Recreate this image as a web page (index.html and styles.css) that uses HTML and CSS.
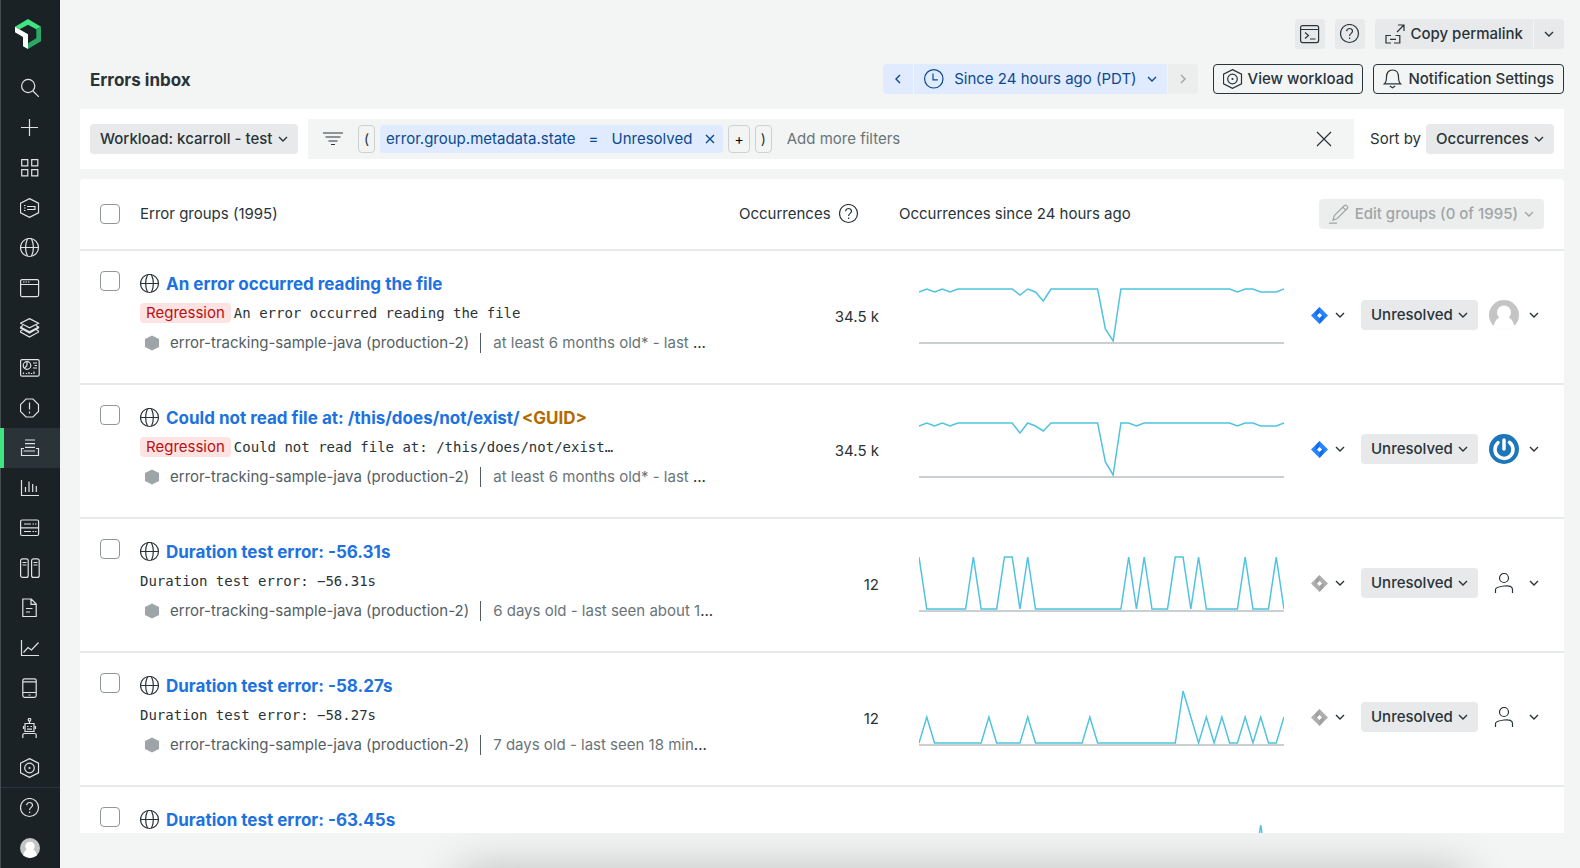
FILE: index.html
```html
<!DOCTYPE html>
<html lang="en">
<head>
    <meta charset="UTF-8">
    <meta name="viewport" content="width=device-width, initial-scale=1.0">
    <title>Errors inbox</title>
    <link rel="stylesheet" href="styles.css">
</head>
<body>

    <!-- Icon sprite -->
    <svg class="sprite" aria-hidden="true">
        <symbol id="search" viewBox="0 0 20 20"><circle cx="8.2" cy="8" r="6.6"/><path d="M13 13l5.8 5.8"/></symbol>
        <symbol id="plus" viewBox="0 0 20 20"><path d="M9.5 1v17M1 9.5h17"/></symbol>
        <symbol id="apps" viewBox="0 0 20 20"><path d="M1.7 1.7h6.1v6.1H1.7zM11.7 1.7h6.1v6.1h-6.1zM1.7 11.7h6.1v6.1H1.7zM11.7 11.7h6.1v6.1h-6.1z"/></symbol>
        <symbol id="entities" viewBox="0 0 20 20"><path d="M9.5.6l9 4.6v9.6l-9 4.6-9-4.6V5.2z"/><path d="M4 7.5h1.5M7 8.5h8v3H7M4 10h1.5M4 12.5h1.5M7 8.5h3"/></symbol>
        <symbol id="globe" viewBox="0 0 20 20"><circle cx="9.5" cy="9.5" r="9"/><path d="M7.5.8C5 6.5 5 12.5 7.5 18.2M11.5.8c2.5 5.7 2.5 11.7 0 17.4M.5 9.5h18"/></symbol>
        <symbol id="browser" viewBox="0 0 20 20"><rect x=".6" y="1.6" width="18" height="17" rx="1.5"/><path d="M.6 6.5h18M3 4h1.5M5.500 4H7M8 4h1.5"/></symbol>
        <symbol id="layers" viewBox="0 0 20 20"><path d="M9.5.6l9 4.6-9 4.6-9-4.6zM.5 9l9 4.7 9-4.7L16 7.5M.5 9L3 7.5M.5 9v1l9 5 9-5V9M.5 13v1l9 5 9-5v-1L16 11.5M.5 13L3 11.500"/></symbol>
        <symbol id="dashboard" viewBox="0 0 20 20"><rect x=".6" y="1.6" width="18.6" height="16.6" rx="1.5"/><circle cx="7" cy="7.5" r="3.8"/><path d="M7 7.5V3.8M7 7.5l-2.5 2.7M13 5h4M14.5 7.5H17M13 10h4M3.5 14.5V16M6.5 15v1M9 14v2M11.5 15v1M14 13.5V16"/></symbol>
        <symbol id="alert" viewBox="0 0 20 20"><path d="M6 1h7l5.5 5.5v7L13 19H6L.5 13.5v-7zM9.5 4.5v7M9.5 13.5v2"/></symbol>
        <symbol id="inbox" viewBox="0 0 20 20"><path d="M5 2h10M5 5.7h10M5 9.3h10M3.5 13H15M4 10.5H1.5v7h17v-7H16"/></symbol>
        <symbol id="bars" viewBox="0 0 20 20"><path d="M1.5 2v15.500H19M5.5 14V9M9 14V3.5M12.7 14V6M16.3 14V8"/></symbol>
        <symbol id="server" viewBox="0 0 20 20"><rect x=".6" y="2" width="18" height="15.5" rx="1.5"/><path d="M.6 9.8h18M4 6h7M12.5 6H14M15 6h1.5M4 13.5h7M12.5 13.5H14M15 13.5h1.5"/></symbol>
        <symbol id="racks" viewBox="0 0 20 20"><rect x=".6" y=".8" width="7.6" height="18.6" rx="2"/><rect x="11.6" y=".8" width="7.6" height="18.6" rx="2"/><path d="M2.5 4.5h4M2.5 7h4M13.5 4.5h4M13.5 7h4"/></symbol>
        <symbol id="doc" viewBox="0 0 20 20"><path d="M2.8 1h8.5l4.9 5v12.5H2.8zM11 1v5.3h5M6 10.5h6.5M6 14h4"/></symbol>
        <symbol id="trend" viewBox="0 0 20 20"><path d="M1.5 2v15.5H19M3.5 14.5L8 9.5l3.5 2.5 7-7.5"/></symbol>
        <symbol id="phone" viewBox="0 0 20 20"><rect x="2.8" y=".8" width="13.4" height="18.6" rx="1.8"/><path d="M3 3.8h13M3 14.5h13M8.5 17h2"/></symbol>
        <symbol id="robot" viewBox="0 0 20 20"><circle cx="9.5" cy="1.8" r="1.3"/><path d="M9.5 3v2.5M5 5.5h9v8H5zM3.5 8v3M15.5 8v3M7 8.5h1.5M10.5 8.5H12M7 11.2h5M2.8 20v-3q0-1.5 1.5-1.5h10.4q1.5 0 1.500 1.5v3"/></symbol>
        <symbol id="workload" viewBox="0 0 20 20"><path d="M9.5.6l9 4.6v9.6l-9 4.6-9-4.6V5.2z"/><circle cx="9.500" cy="10" r="4.8"/><circle cx="9.5" cy="10" r=".5"/></symbol>
        <symbol id="help" viewBox="0 0 20 20"><circle cx="9.5" cy="9.5" r="9"/><path d="M6.7 7.2c0-3.6 5.8-3.6 5.8 0 0 2.2-2.9 2.2-2.9 4.8M9.6 13.5V15"/></symbol>
        <symbol id="console" viewBox="0 0 20 20"><rect x=".6" y="1.6" width="18" height="17" rx="2"/><path d="M.6 5.5h18M5 8.5l3.5 3-3.5 3M10 15h5.5"/></symbol>
        <symbol id="permalink" viewBox="0 0 20 20"><path d="M12 8l6.5-6.5M13 1h6v6M6 11.5H1V19h5M10.5 11.5h4.3V19H9M5 15.3h6"/></symbol>
        <symbol id="clock" viewBox="0 0 20 20"><circle cx="9.8" cy="9.8" r="9.2"/><path d="M9 4.5v6.3h4.8"/></symbol>
        <symbol id="bell" viewBox="0 0 20 20"><path d="M1.5 14.8c2-1.8 2-3.2 2-6.8C3.5 3.5 6 1 9.5 1s6 2.5 6 7c0 3.6 0 5 2 6.8zM6.8 17l2.7 1.8 2.7-1.8"/></symbol>
        <symbol id="filter" viewBox="0 0 20 20"><path d="M0 4h20M2.5 8h15M5.5 12h9M8 15.5h4"/></symbol>
        <symbol id="close" viewBox="0 0 20 20"><path d="M3 3l14 14M17 3L3 17"/></symbol>
        <symbol id="pencil" viewBox="0 0 20 20"><path d="M4 16l1.3-4.5L15.5 1.5q1-.8 2 .2l.8.8q.9 1 0 2L8 14.7zM13.8 3.2L16.600 6M0 19.2h8"/></symbol>
        <symbol id="chevron" viewBox="0 0 10 10"><path d="M1 3l4 4 4-4"/></symbol>
        <symbol id="chevron-left" viewBox="0 0 10 10"><path d="M7 1L3 5l4 4"/></symbol>
        <symbol id="chevron-right" viewBox="0 0 10 10"><path d="M3 1l4 4-4 4"/></symbol>
        <symbol id="x-small" viewBox="0 0 10 10"><path d="M1 1l8 8M9 1L1 9"/></symbol>
        <symbol id="user" viewBox="0 0 20 20"><circle cx="10" cy="5" r="4.5"/><path d="M1.5 20v-3.5Q1.5 14 10 13t8.5 3.500V20"/></symbol>
        <symbol id="hexagon" viewBox="0 0 14 16"><path d="M7 .5L14 4v8l-7 3.5L0 12V4z"/></symbol>
        <symbol id="jira" viewBox="0 0 18 18"><path d="M9 0l9 9-9 9-9-9z"/><path class="jira-fold" d="M9 0v6.5l-3 3L4.5 8q0-4 4.5-8zM9 18v-6.5l3-3 1.5 1.5q0 4-4.5 8z"/><path class="jira-hole" d="M9 6.3L11.7 9 9 11.7 6.3 9z"/></symbol>
        <symbol id="avatar" viewBox="0 0 30 30"><circle cx="15" cy="15" r="15" fill="#c4c4c4"/><circle cx="15" cy="12.5" r="7" fill="#fff"/><path d="M4.5 26q2-8 7.5-9h6q5.5 1 7.5 9-4.5 4-10.500 4T4.500 26z" fill="#fff"/></symbol>
        <symbol id="gravatar" viewBox="0 0 30 30"><circle cx="15" cy="15" r="15" fill="#1e76ba"/><path d="M15 6v9" fill="none" stroke="#fff" stroke-width="3.5" stroke-linecap="round"/><path d="M20.5 8.3a9 9 0 1 1-11.5.4" fill="none" stroke="#fff" stroke-width="3.5" stroke-linecap="round"/></symbol>
    </svg>

    <!-- Sidebar -->
    <nav class="sidebar" aria-label="Main">
        <a class="logo" href="#" aria-label="Home">
            <svg width="26" height="30" viewBox="45 57 78 90">
                <path d="M45 80l39-23 39 23-14 8-25-14-25 14z" fill="#3ee681"/>
                <path d="M123 80v44l-39 23v-17l25-15V88z" fill="#2ba866"/>
                <path d="M45 80l39 23v44l-15-8v-28L45 97z" fill="#fff"/>
            </svg>
        </a>
        <a class="nav-item" href="#" aria-label="Search"><svg class="icon"><use href="#search"/></svg></a>
        <a class="nav-item" href="#" aria-label="Add data"><svg class="icon"><use href="#plus"/></svg></a>
        <a class="nav-item" href="#" aria-label="Apps"><svg class="icon"><use href="#apps"/></svg></a>
        <a class="nav-item" href="#" aria-label="All entities"><svg class="icon"><use href="#entities"/></svg></a>
        <a class="nav-item" href="#" aria-label="APM"><svg class="icon"><use href="#globe"/></svg></a>
        <a class="nav-item" href="#" aria-label="Browser"><svg class="icon"><use href="#browser"/></svg></a>
        <a class="nav-item" href="#" aria-label="Kubernetes"><svg class="icon"><use href="#layers"/></svg></a>
        <a class="nav-item" href="#" aria-label="Dashboards"><svg class="icon"><use href="#dashboard"/></svg></a>
        <a class="nav-item" href="#" aria-label="Alerts"><svg class="icon"><use href="#alert"/></svg></a>
        <a class="nav-item active" href="#" aria-label="Errors inbox"><svg class="icon"><use href="#inbox"/></svg></a>
        <a class="nav-item" href="#" aria-label="Query data"><svg class="icon"><use href="#bars"/></svg></a>
        <a class="nav-item" href="#" aria-label="Infrastructure"><svg class="icon"><use href="#server"/></svg></a>
        <a class="nav-item" href="#" aria-label="Hosts"><svg class="icon"><use href="#racks"/></svg></a>
        <a class="nav-item" href="#" aria-label="Logs"><svg class="icon"><use href="#doc"/></svg></a>
        <a class="nav-item" href="#" aria-label="Metrics"><svg class="icon"><use href="#trend"/></svg></a>
        <a class="nav-item" href="#" aria-label="Mobile"><svg class="icon"><use href="#phone"/></svg></a>
        <a class="nav-item" href="#" aria-label="Synthetics"><svg class="icon"><use href="#robot"/></svg></a>
        <a class="nav-item" href="#" aria-label="Workloads"><svg class="icon"><use href="#workload"/></svg></a>
        <div class="sidebar-footer">
            <a class="nav-item" href="#" aria-label="Help"><svg class="icon"><use href="#help"/></svg></a>
            <a class="nav-item" href="#" aria-label="Account"><svg class="icon picture"><use href="#avatar"/></svg></a>
        </div>
    </nav>

    <main class="page">
        <div class="toolbar">
            <button class="btn btn-icon" aria-label="Console"><svg class="icon"><use href="#console"/></svg></button>
            <button class="btn btn-icon" aria-label="Help"><svg class="icon"><use href="#help"/></svg></button>
            <div class="btn-group">
                <button class="btn"><svg class="icon"><use href="#permalink"/></svg>Copy permalink</button>
                <button class="btn btn-icon" aria-label="More"><svg class="chevron"><use href="#chevron"/></svg></button>
            </div>
        </div>

        <header class="page-header">
            <h1>Errors inbox</h1>
            <div class="btn-group time-picker">
                <button class="btn btn-icon" aria-label="Previous"><svg class="chevron"><use href="#chevron-left"/></svg></button>
                <button class="btn btn-time"><svg class="icon"><use href="#clock"/></svg>Since 24 hours ago (PDT)<svg class="chevron"><use href="#chevron"/></svg></button>
                <button class="btn btn-icon" aria-label="Next" disabled><svg class="chevron"><use href="#chevron-right"/></svg></button>
            </div>
            <button class="btn btn-outline"><svg class="icon"><use href="#workload"/></svg>View workload</button>
            <button class="btn btn-outline"><svg class="icon"><use href="#bell"/></svg>Notification Settings</button>
        </header>

        <!-- Filters -->
        <section class="filters">
            <div class="select">
                <select aria-label="Workload"><option>Workload: kcarroll - test</option></select>
                <svg class="chevron"><use href="#chevron"/></svg>
            </div>
            <div class="filter-field">
                <svg class="icon filter-icon"><use href="#filter"/></svg>
                <span class="token">(</span>
                <span class="chip">
                    <span>error.group.metadata.state</span>
                    <span>=</span>
                    <span>Unresolved</span>
                    <button aria-label="Remove filter"><svg class="chevron"><use href="#x-small"/></svg></button>
                </span>
                <button class="token token-add">+</button>
                <span class="token">)</span>
                <input type="text" placeholder="Add more filters" aria-label="Add more filters">
                <button class="clear" aria-label="Clear filters"><svg class="icon"><use href="#close"/></svg></button>
            </div>
            <div class="sort">
                <label for="sort">Sort by</label>
                <div class="select">
                    <select id="sort"><option>Occurrences</option></select>
                    <svg class="chevron"><use href="#chevron"/></svg>
                </div>
            </div>
        </section>

        <!-- Error groups -->
        <section class="groups">
            <table>
                <colgroup>
                    <col class="col-check">
                    <col>
                    <col class="col-count">
                    <col class="col-chart">
                    <col class="col-actions">
                </colgroup>
                <thead>
                    <tr>
                        <th class="check"><input type="checkbox" aria-label="Select all"></th>
                        <th>Error groups (1995)</th>
                        <th class="count"><span class="with-icon">Occurrences <svg class="icon"><use href="#help"/></svg></span></th>
                        <th>Occurrences since 24 hours ago</th>
                        <th class="edit"><button class="btn" disabled><svg class="icon"><use href="#pencil"/></svg>Edit groups (0 of 1995)<svg class="chevron"><use href="#chevron"/></svg></button></th>
                    </tr>
                </thead>
                <tbody>
                    <tr>
                        <td class="check"><input type="checkbox" aria-label="Select group"></td>
                        <td class="group">
                            <h2><svg class="icon"><use href="#globe"/></svg><a href="#">An error occurred reading the file</a></h2>
                            <p class="message"><span class="badge">Regression</span><code>An error occurred reading the file</code></p>
                            <p class="meta"><svg class="hexagon"><use href="#hexagon"/></svg><span class="entity">error-tracking-sample-java (production-2)</span><span class="age">at least 6 months old* - last <b>...</b></span></p>
                        </td>
                        <td class="count">34.5 k</td>
                        <td class="chart">
                            <svg viewBox="0 0 47 60" preserveAspectRatio="none">
                                <path class="baseline" d="M0 59H47"/>
                                <path class="line" d="M0 8L1 5L2 8L3 5L4 8L5 5H12L13 11L14 5L15 8L16 17L17 5H23L24 45L25 57L26 5H40L41 8L42 5H43L44 8H46L47 5"/>
                            </svg>
                        </td>
                        <td class="actions">
                            <div>
                                <button class="menu tracker" aria-label="Jira"><svg class="jira"><use href="#jira"/></svg><svg class="chevron"><use href="#chevron"/></svg></button>
                                <div class="select">
                                    <select aria-label="Status"><option>Unresolved</option></select>
                                    <svg class="chevron"><use href="#chevron"/></svg>
                                </div>
                                <button class="menu" aria-label="Assignee"><svg class="face"><use href="#avatar"/></svg><svg class="chevron"><use href="#chevron"/></svg></button>
                            </div>
                        </td>
                    </tr>
                    <tr>
                        <td class="check"><input type="checkbox" aria-label="Select group"></td>
                        <td class="group">
                            <h2><svg class="icon"><use href="#globe"/></svg><a href="#">Could not read file at: /this/does/not/exist/<span class="guid">&lt;GUID&gt;</span></a></h2>
                            <p class="message"><span class="badge">Regression</span><code>Could not read file at: /this/does/not/exist…</code></p>
                            <p class="meta"><svg class="hexagon"><use href="#hexagon"/></svg><span class="entity">error-tracking-sample-java (production-2)</span><span class="age">at least 6 months old* - last <b>...</b></span></p>
                        </td>
                        <td class="count">34.5 k</td>
                        <td class="chart">
                            <svg viewBox="0 0 47 60" preserveAspectRatio="none">
                                <path class="baseline" d="M0 59H47"/>
                                <path class="line" d="M0 8L1 5L2 8L3 5L4 8L5 5H12L13 15L14 5L15 8L16 13L17 5H23L24 44L25 57L26 5H27L28 8L29 5H40L41 8L42 5H43L44 8H46L47 5"/>
                            </svg>
                        </td>
                        <td class="actions">
                            <div>
                                <button class="menu tracker" aria-label="Jira"><svg class="jira"><use href="#jira"/></svg><svg class="chevron"><use href="#chevron"/></svg></button>
                                <div class="select">
                                    <select aria-label="Status"><option>Unresolved</option></select>
                                    <svg class="chevron"><use href="#chevron"/></svg>
                                </div>
                                <button class="menu" aria-label="Assignee"><svg class="face"><use href="#gravatar"/></svg><svg class="chevron"><use href="#chevron"/></svg></button>
                            </div>
                        </td>
                    </tr>
                    <tr>
                        <td class="check"><input type="checkbox" aria-label="Select group"></td>
                        <td class="group">
                            <h2><svg class="icon"><use href="#globe"/></svg><a href="#">Duration test error: -56.31s</a></h2>
                            <p class="message"><code>Duration test error: −56.31s</code></p>
                            <p class="meta"><svg class="hexagon"><use href="#hexagon"/></svg><span class="entity">error-tracking-sample-java (production-2)</span><span class="age">6 days old - last seen about 1<b>...</b></span></p>
                        </td>
                        <td class="count">12</td>
                        <td class="chart">
                            <svg viewBox="0 0 47 60" preserveAspectRatio="none">
                                <path class="baseline" d="M0 59H47"/>
                                <path class="line" d="M0 5L1 57H6L7 5L8 57H10L11 5H12L13 57L14 5L15 57H26L27 5L28 57L29 5L30 57H32L33 5H34L35 57L36 5L37 57H41L42 5L43 57H45L46 5L47 57"/>
                            </svg>
                        </td>
                        <td class="actions">
                            <div>
                                <button class="menu tracker unlinked" aria-label="Jira"><svg class="jira"><use href="#jira"/></svg><svg class="chevron"><use href="#chevron"/></svg></button>
                                <div class="select">
                                    <select aria-label="Status"><option>Unresolved</option></select>
                                    <svg class="chevron"><use href="#chevron"/></svg>
                                </div>
                                <button class="menu" aria-label="Assignee"><span class="face"><svg class="icon"><use href="#user"/></svg></span><svg class="chevron"><use href="#chevron"/></svg></button>
                            </div>
                        </td>
                    </tr>
                    <tr>
                        <td class="check"><input type="checkbox" aria-label="Select group"></td>
                        <td class="group">
                            <h2><svg class="icon"><use href="#globe"/></svg><a href="#">Duration test error: -58.27s</a></h2>
                            <p class="message"><code>Duration test error: −58.27s</code></p>
                            <p class="meta"><svg class="hexagon"><use href="#hexagon"/></svg><span class="entity">error-tracking-sample-java (production-2)</span><span class="age">7 days old - last seen 18 min<b>...</b></span></p>
                        </td>
                        <td class="count">12</td>
                        <td class="chart">
                            <svg viewBox="0 0 47 60" preserveAspectRatio="none">
                                <path class="baseline" d="M0 59H47"/>
                                <path class="line" d="M0 57L1 31L2 57H8L9 31L10 57H13L14 31L15 57H21L22 31L23 57H33L34 5L36 57L37 31L38 57L39 31L40 57H41L42 31L43 57L44 31L45 57H46L47 31"/>
                            </svg>
                        </td>
                        <td class="actions">
                            <div>
                                <button class="menu tracker unlinked" aria-label="Jira"><svg class="jira"><use href="#jira"/></svg><svg class="chevron"><use href="#chevron"/></svg></button>
                                <div class="select">
                                    <select aria-label="Status"><option>Unresolved</option></select>
                                    <svg class="chevron"><use href="#chevron"/></svg>
                                </div>
                                <button class="menu" aria-label="Assignee"><span class="face"><svg class="icon"><use href="#user"/></svg></span><svg class="chevron"><use href="#chevron"/></svg></button>
                            </div>
                        </td>
                    </tr>
                    <tr>
                        <td class="check"><input type="checkbox" aria-label="Select group"></td>
                        <td class="group">
                            <h2><svg class="icon"><use href="#globe"/></svg><a href="#">Duration test error: -63.45s</a></h2>
                            <p class="message"></p>
                            <p class="meta"></p>
                        </td>
                        <td class="count"></td>
                        <td class="chart">
                            <svg viewBox="0 0 47 60" preserveAspectRatio="none">
                                <path class="baseline" d="M0 59H47"/>
                                <path class="line" d="M0 57H43L44 5L45 57H47"/>
                            </svg>
                        </td>
                        <td class="actions"></td>
                    </tr>
                </tbody>
            </table>
        </section>
        <div class="page-bottom"></div>
    </main>

</body>
</html>
```

FILE: styles.css
```css
* {
    box-sizing: border-box;
}

body {
    margin: 0;
    display: flex;
    height: 100vh;
    overflow: hidden;
    background-color: #f3f4f4;
    color: #293338;
    font-family: Inter, "Liberation Sans", sans-serif;
    font-size: 15px;
    line-height: 20px;
}

h1, h2, p {
    margin: 0;
}

a {
    color: inherit;
    text-decoration: none;
}

button, input, select {
    margin: 0;
    font: inherit;
    color: inherit;
}

svg {
    display: block;
    flex: none;
    fill: none;
    stroke: currentColor;
    stroke-width: 1.2;
}

.sprite {
    position: absolute;
    width: 0;
    height: 0;
}

.icon {
    width: 20px;
    height: 20px;
}

.chevron {
    width: 10px;
    height: 10px;
    stroke-width: 1.4;
}

.picture {
    stroke: none;
}

/* Sidebar */
.sidebar {
    display: flex;
    flex-direction: column;
    flex: none;
    width: 60px;
    border-left: 1px solid #454c50;
    background-color: #1a2226;
    color: #e0e3e3;
}

.logo {
    height: 68px;
    padding: 19px 14px;
}

.logo svg {
    stroke: none;
}

.nav-item {
    display: flex;
    justify-content: center;
    align-items: center;
    flex: none;
    height: 40px;
    padding-right: 1px;
}

.nav-item.active {
    margin-left: -1px;
    padding-right: 4px;
    border-left: 4px solid #3ee681;
    background-color: #293338;
}

.sidebar-footer {
    box-shadow: 0 -1px #2c3539;
}

/* Buttons */
.btn {
    display: flex;
    align-items: center;
    gap: 5px;
    height: 30px;
    padding: 0 10px;
    border: none;
    border-radius: 4px;
    background-color: #e7e9ea;
    font-weight: 500;
    white-space: nowrap;
    cursor: pointer;
}

.btn:disabled {
    background-color: #eceeee;
    color: #9fa5a7;
    cursor: default;
}

.btn-icon {
    justify-content: center;
    width: 30px;
    padding: 0;
}

.btn-outline {
    border: 1px solid #293338;
    background-color: transparent;
    padding: 0 9px;
}

.btn-group {
    display: flex;
    gap: 1px;
}

.btn-group .btn {
    border-radius: 0;
}

.btn-group .btn:first-child {
    border-radius: 4px 0 0 4px;
}

.btn-group .btn:last-child {
    border-radius: 0 4px 4px 0;
}

.time-picker {
    margin-right: 5px;
}

.time-picker .btn:enabled {
    background-color: #e0ebff;
    color: #0b4a8f;
    font-weight: 400;
}

.time-picker .btn-time {
    gap: 10px;
}

/* Drop-downs, the chevron shares the cell of the select */
.select {
    display: grid;
    align-items: center;
}

.select > * {
    grid-area: 1 / 1;
}

.select select {
    height: 30px;
    padding: 0 25px 0 10px;
    border: none;
    border-radius: 4px;
    background-color: #e7e9ea;
    font-weight: 500;
    appearance: none;
}

.select .chevron {
    justify-self: end;
    margin-right: 10px;
    pointer-events: none;
}

/* Page */
.page {
    display: flex;
    flex-direction: column;
    flex: 1;
    min-width: 0;
    padding: 19px 16px 0 20px;
}

.toolbar {
    display: flex;
    justify-content: flex-end;
    gap: 10px;
}

.page-header {
    display: flex;
    align-items: center;
    gap: 10px;
    margin: 15px 0;
}

.page-header h1 {
    flex: 1;
    padding: 2px 0 0 10px;
    font-size: 17px;
    font-weight: 700;
}

.filters {
    display: flex;
    align-items: center;
    gap: 10px;
    padding: 10px;
    background-color: #fff;
}

.filter-field {
    display: flex;
    align-items: center;
    flex: 1;
    gap: 5px;
    height: 40px;
    padding: 0 12px 0 15px;
    background-color: #f3f4f4;
}

.filter-icon {
    margin-right: 10px;
}

.token {
    display: flex;
    justify-content: center;
    align-items: center;
    height: 28px;
    padding: 0 5px;
    border: 1px solid #cdd1d2;
    border-radius: 4px;
    background: none;
    font-size: 14px;
}

.token-add {
    color: #000;
}

.chip {
    display: flex;
    align-items: center;
    gap: 13px;
    height: 28px;
    padding: 0 8px 0 6px;
    border-radius: 4px;
    background-color: #e0ebff;
    color: #0b4a8f;
}

.chip button, .clear {
    padding: 0;
    border: none;
    background: none;
}

.filter-field input {
    flex: 1;
    min-width: 0;
    padding: 0 10px;
    border: none;
    background: none;
}

.filter-field input::placeholder {
    color: #6a7478;
}

.clear {
    padding: 0 8px;
}

.sort {
    display: flex;
    align-items: center;
    gap: 5px;
    padding-left: 6px;
}

/* Table */
.groups {
    flex: 1;
    min-height: 0;
    margin-top: 10px;
    overflow: hidden;
    border-radius: 4px 4px 0 0;
    background-color: #fff;
}

table {
    width: 100%;
    table-layout: fixed;
    border-spacing: 0;
}

.col-check {
    width: 60px;
}

.col-count {
    width: 180px;
}

.col-chart {
    width: 405px;
}

.col-actions {
    width: 260px;
}

th, td {
    padding: 0;
    border-bottom: 2px solid #e7e9ea;
}

th {
    height: 72px;
    font-weight: 400;
    text-align: left;
}

.check {
    padding-left: 20px;
    vertical-align: top;
}

td.check {
    padding-top: 20px;
}

th.check {
    vertical-align: middle;
}

.check input {
    display: block;
    width: 20px;
    height: 20px;
    border: 1px solid #8e9699;
    border-radius: 4px;
    background-color: #fff;
    appearance: none;
}

.count {
    padding: 0 20px;
}

td.count {
    text-align: right;
}

.with-icon {
    display: flex;
    align-items: center;
    gap: 8px;
}

.edit .btn {
    gap: 6px;
    margin: 0 20px 0 auto;
}

.group {
    padding: 20px 0 28px;
}

.group h2 {
    display: flex;
    align-items: center;
    gap: 6px;
    color: #1d72e0;
    font-size: 17px;
    font-weight: 700;
    line-height: 26px;
}

.group h2 .icon {
    color: #293338;
}

.guid {
    margin-left: 2px;
    color: #b36b00;
}

.message {
    display: flex;
    align-items: center;
    gap: 3px;
    height: 20px;
    margin-top: 6px;
}

.message code {
    font-family: "DejaVu Sans Mono", monospace;
    font-size: 14px;
    line-height: 18px;
}

.badge {
    padding: 0 6px;
    border-radius: 4px;
    background-color: #ffe2e2;
    color: #b81111;
}

.meta {
    display: flex;
    align-items: center;
    height: 24px;
    margin-top: 8px;
    padding-left: 5px;
    white-space: nowrap;
}

.hexagon {
    width: 14px;
    height: 16px;
    margin-right: 11px;
    fill: #9ea5a8;
    stroke: none;
}

.entity {
    padding-right: 11px;
    border-right: 1px solid #535e63;
    color: #535e63;
}

.age {
    padding-left: 12px;
    color: #6a7478;
}

.age b {
    color: #293338;
    font-weight: 400;
}

.chart {
    padding: 0 20px 6px;
}

.chart svg {
    width: 100%;
    height: 60px;
}

.chart path {
    vector-effect: non-scaling-stroke;
}

.baseline {
    stroke: #cacfd2;
    stroke-width: 2;
}

.line {
    stroke: #4fc3df;
    stroke-width: 1.5;
}

.actions {
    padding: 0 25px 4px 0;
}

.actions > div {
    display: flex;
    justify-content: flex-end;
    align-items: center;
    gap: 11px;
}

.menu {
    display: flex;
    align-items: center;
    gap: 10px;
    padding: 0;
    border: none;
    background: none;
}

.tracker {
    gap: 7px;
    margin-right: 5px;
}

.jira {
    width: 17px;
    height: 17px;
    fill: #2684ff;
    stroke: none;
}

.jira-fold {
    fill: #0052cc;
    opacity: 0.5;
}

.jira-hole {
    fill: #fff;
}

.unlinked .jira {
    filter: grayscale(1);
    opacity: 0.6;
}

.face {
    display: flex;
    justify-content: center;
    align-items: center;
    width: 30px;
    height: 30px;
    stroke: none;
}

/* Soft shade under the list */
.page-bottom {
    position: relative;
    flex: none;
    height: 35px;
    overflow: hidden;
}

.page-bottom::after {
    content: "";
    position: absolute;
    top: 100%;
    left: 380px;
    right: 100px;
    height: 40px;
    box-shadow: 0 6px 48px rgba(0, 0, 0, 0.3);
}
```
